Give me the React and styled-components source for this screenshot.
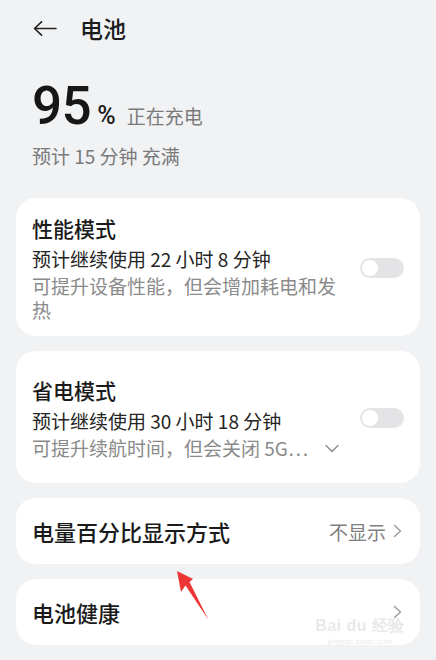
import React from "react";
import styled, { createGlobalStyle } from "styled-components";

const GlobalStyle = createGlobalStyle`
  html, body {
    margin: 0;
    padding: 0;
    background: #f1f2f4;
  }
  body {
    font-family: "Noto Sans CJK SC", "Noto Sans", sans-serif;
    color: #1a1a1a;
  }
`;

const Page = styled.div`
  position: relative;
  width: 436px;
  height: 660px;
  overflow: hidden;
  background: #f1f2f4;
  box-sizing: border-box;
  padding: 0 16px;
`;

const Header = styled.div`
  display: flex;
  align-items: center;
  gap: 23px;
  height: 56px;
  padding-left: 17px;
`;

const Title = styled.div`
  font-size: 23px;
  font-weight: 500;
  color: #1c1c1c;
`;

const Summary = styled.div`
  padding: 24px 16px 0;
  margin-bottom: 30px;
`;

const LevelRow = styled.div`
  display: flex;
  align-items: baseline;
  height: 53px;
`;

const Big = styled.span`
  font-family: Roboto, "Noto Sans", sans-serif;
  font-size: 53px;
  line-height: 1;
  font-weight: 500;
  letter-spacing: -0.5px;
  color: #161616;
`;

const Pct = styled.span`
  font-family: Roboto, "Noto Sans", sans-serif;
  font-size: 25px;
  line-height: 1;
  font-weight: 500;
  margin-left: 6px;
  color: #1c1c1c;
`;

const Charging = styled.span`
  font-size: 19px;
  line-height: 1;
  color: #7a7a7a;
  margin-left: 11px;
`;

const Estimate = styled.div`
  font-size: 19px;
  line-height: 24px;
  color: #7a7a7a;
  margin-top: 11px;
`;

const Card = styled.div`
  background: #ffffff;
  border-radius: 20px;
  margin-bottom: 15px;
  box-sizing: border-box;
  padding: ${(p) => p.padding || "16px"};
  height: ${(p) => p.h || "auto"};
  display: flex;
  align-items: center;
  gap: 12px;
`;

const Body = styled.div`
  flex: 1;
  min-width: 0;
`;

const CardTitle = styled.div`
  font-size: ${(p) => p.size || "21px"};
  font-weight: 500;
  color: #1a1a1a;
  line-height: 28px;
`;

const Line = styled.div`
  font-size: 19px;
  color: #252525;
  line-height: 26px;
  margin-top: 4px;
`;

const Hint = styled.div`
  display: flex;
  align-items: center;
  gap: 17px;
  font-size: 19px;
  color: #8a8a8a;
  line-height: 24px;
  margin-top: 2px;
`;

const Toggle = styled.div`
  position: relative;
  width: 44px;
  height: 20px;
  border-radius: 10px;
  background: #e4e4e6;
  flex-shrink: 0;
  &::after {
    content: "";
    position: absolute;
    left: 2px;
    top: 2px;
    width: 16px;
    height: 16px;
    border-radius: 50%;
    background: #fff;
  }
`;

const Value = styled.div`
  display: flex;
  align-items: center;
  gap: 7px;
  font-size: 19px;
  color: #7f7f7f;
  margin-right: 2px;
`;

const Watermark = styled.div`
  position: absolute;
  right: 31px;
  bottom: 14px;
  color: rgba(205, 205, 210, 0.45);
  text-align: center;
  font-family: "Liberation Sans", sans-serif;
  line-height: 1;
  pointer-events: none;
`;

const WmTop = styled.div`
  font-size: 16px;
  font-weight: 700;
  letter-spacing: 0.5px;
`;

const WmBottom = styled.div`
  font-size: 8px;
  margin-top: 4px;
`;

const ArrowOverlay = styled.svg`
  position: absolute;
  left: 0;
  top: 0;
  pointer-events: none;
`;

const Chevron = ({ dir = "right", color = "#9a9a9a" }) =>
  dir === "right" ? (
    <svg width="9" height="14" viewBox="0 0 9 14" fill="none">
      <path d="M1.5 1.5 L7.5 7 L1.5 12.5" stroke={color} strokeWidth="1.4" strokeLinecap="round" strokeLinejoin="round" />
    </svg>
  ) : (
    <svg width="14" height="9" viewBox="0 0 14 9" fill="none">
      <path d="M1 1.5 L7 7.5 L13 1.5" stroke={color} strokeWidth="1.4" strokeLinecap="round" strokeLinejoin="round" />
    </svg>
  );

export default function App() {
  return (
    <>
      <GlobalStyle />
      <Page>
        <Header>
          <svg width="24" height="15" viewBox="0 0 24 15" fill="none">
            <path d="M23 7.5 H1.5 M8.5 0.8 L1.5 7.5 L8.5 14.2" stroke="#222" strokeWidth="1.6" strokeLinecap="round" strokeLinejoin="round" />
          </svg>
          <Title>电池</Title>
        </Header>

        <Summary>
          <LevelRow>
            <Big>95</Big>
            <Pct>%</Pct>
            <Charging>正在充电</Charging>
          </LevelRow>
          <Estimate>预计 15 分钟 充满</Estimate>
        </Summary>

        <Card padding="16px 16px 14px">
          <Body>
            <CardTitle>性能模式</CardTitle>
            <Line>预计继续使用 22 小时 8 分钟</Line>
            <Hint>可提升设备性能，但会增加耗电和发热</Hint>
          </Body>
          <Toggle />
        </Card>

        <Card padding="25px 16px 23px">
          <Body>
            <CardTitle>省电模式</CardTitle>
            <Line>预计继续使用 30 小时 18 分钟</Line>
            <Hint>
              可提升续航时间，但会关闭 5G…
              <Chevron dir="down" color="#8a8a8a" />
            </Hint>
          </Body>
          <Toggle />
        </Card>

        <Card h="66px" padding="0 16px">
          <Body>
            <CardTitle size="22px">电量百分比显示方式</CardTitle>
          </Body>
          <Value>
            不显示
            <Chevron />
          </Value>
        </Card>

        <Card h="66px" padding="0 16px">
          <Body>
            <CardTitle size="22px">电池健康</CardTitle>
          </Body>
          <Value>
            <Chevron />
          </Value>
        </Card>

        <ArrowOverlay width="436" height="660" viewBox="0 0 436 660">
          <path d="M177 571 L193 579 L189.5 582 L208.5 620 L185.5 585.5 L181 592 Z" fill="#ee3535" />
        </ArrowOverlay>

        <Watermark>
          <WmTop>Bai du 经验</WmTop>
          <WmBottom>jingyan.baidu.com</WmBottom>
        </Watermark>
      </Page>
    </>
  );
}
